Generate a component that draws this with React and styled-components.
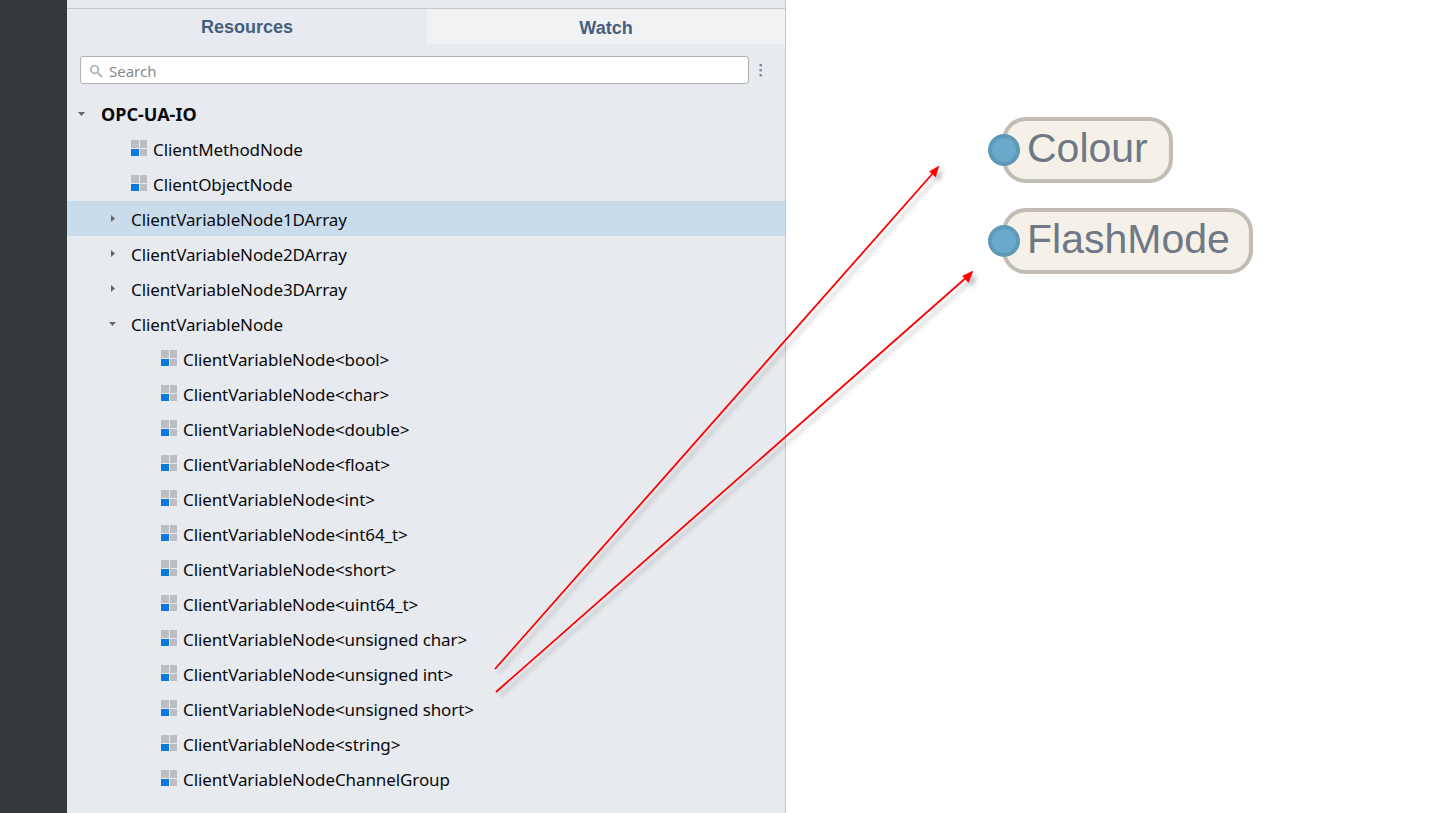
import styled, { createGlobalStyle } from 'styled-components';

const GlobalStyle = createGlobalStyle`
    html, body {
        margin: 0;
        padding: 0;
        background: #fff;
    }
`

const Page = styled.div`
    position: relative;
    display: flex;
    width: 1445px;
    height: 813px;
    overflow: hidden;
    background: #fff;
`

const Rail = styled.div`
    width: 67px;
    flex: none;
    background: #33393d;
`

const Panel = styled.aside`
    width: 718px;
    flex: none;
    padding-top: 8px;
    background: #e7eaef;
    border-right: 1px solid #c6c6c6;
`

const Tabs = styled.div`
    display: flex;
    height: 35px;
    border-top: 1px solid #c9c9c9;
`

const Tab = styled.div`
    display: flex;
    align-items: center;
    justify-content: center;
    width: ${p => p.$width}px;
    padding-top: ${p => (p.$active ? 2 : 3)}px;
    box-sizing: border-box;
    background: ${p => (p.$active ? '#e7eaef' : '#f0f2f4')};
    color: #45607e;
    font: 700 18px "Liberation Sans", sans-serif;
`

const SearchRow = styled.div`
    display: flex;
    align-items: center;
    gap: 8px;
    padding: 12px 0 0 13px;
`

const SearchBox = styled.div`
    display: flex;
    align-items: center;
    gap: 6px;
    box-sizing: border-box;
    width: 669px;
    height: 28px;
    padding: 1px 0 0 8px;
    background: #fff;
    border: 1px solid #b0b0b0;
    border-radius: 3px;
    color: #8a8a8a;
    font: 15px "Noto Sans", sans-serif;
`

const Tree = styled.div`
    margin-top: 12px;
`

const Row = styled.div`
    display: flex;
    align-items: center;
    box-sizing: border-box;
    height: 35px;
    padding-top: ${p => (p.$bold ? 0 : 2)}px;
    padding-left: ${p => p.$indent}px;
    background: ${p => (p.$selected ? '#c9dcec' : 'transparent')};
    color: #0b0b0b;
    font: ${p => (p.$bold ? 700 : 400)} ${p => (p.$bold ? 18 : 17)}px "Noto Sans", sans-serif;
    letter-spacing: ${p => (p.$bold ? 0 : -0.1)}px;
`

const CaretSlot = styled.span`
    display: flex;
    align-items: center;
    width: ${p => p.$width}px;
    margin-top: ${p => (p.$root ? 0 : -2)}px;
    flex: none;
`

const IconSlot = styled.span`
    display: flex;
    width: 22px;
    margin-top: -3px;
    flex: none;
`

const Canvas = styled.div`
    display: flex;
    flex-direction: column;
    align-items: flex-start;
    gap: 25px;
    padding: 117px 0 0 216px;
`

const Node = styled.div`
    position: relative;
    box-sizing: border-box;
    width: ${p => p.$width}px;
    height: 66px;
    padding-left: 21px;
    background: #f5f0e8;
    border: 4px solid #c2bcb4;
    border-radius: 24px;
    color: #6f7885;
    font: 41px/54px "Liberation Sans", sans-serif;
`

const Port = styled.span`
    position: absolute;
    left: -18px;
    top: 13px;
    box-sizing: border-box;
    width: 32px;
    height: 32px;
    background: #6aa9cc;
    border: 4px solid #5e99b8;
    border-radius: 50%;
`

const Arrows = styled.svg`
    position: absolute;
    left: 0;
    top: 0;
    pointer-events: none;
`

function NodeIcon() {
    return (
        <svg width="16" height="16" viewBox="0 0 16 16">
            <rect x="0" y="0" width="8" height="8" fill="#bcbec2" />
            <rect x="9" y="0" width="7" height="8" fill="#bcbec2" />
            <rect x="0" y="9" width="8" height="7" fill="#0a78dc" />
            <rect x="9" y="9" width="7" height="7" fill="#bcbec2" />
        </svg>
    )
}

function Caret({ open }) {
    return (
        <svg width="10" height="10" viewBox="0 0 10 10">
            {open
                ? <path d="M1 3 H8 L4.5 7 Z" fill="#666" />
                : <path d="M3 1 V8 L7 4.5 Z" fill="#666" />}
        </svg>
    )
}

const variants = ['bool', 'char', 'double', 'float', 'int', 'int64_t', 'short', 'uint64_t', 'unsigned char', 'unsigned int', 'unsigned short', 'string']

function App() {
    return (
        <Page>
            <GlobalStyle />
            <Rail />
            <Panel>
                <Tabs>
                    <Tab $active $width={360}>Resources</Tab>
                    <Tab $width={358}>Watch</Tab>
                </Tabs>
                <SearchRow>
                    <SearchBox>
                        <svg width="14" height="14" viewBox="0 0 14 14" fill="none" stroke="#b5b5b5" strokeWidth="1.8">
                            <circle cx="5.5" cy="5.5" r="3.8" />
                            <path d="M8.5 8.5 L13 13" />
                        </svg>
                        Search
                    </SearchBox>
                    <svg width="8" height="14" viewBox="0 0 8 14" fill="#7f8a99">
                        <rect x="2.5" y="1" width="2.4" height="2.4" />
                        <rect x="2.5" y="6" width="2.4" height="2.4" />
                        <rect x="2.5" y="11" width="2.4" height="2.4" />
                    </svg>
                </SearchRow>
                <Tree>
                    <Row $bold $indent={10}>
                        <CaretSlot $root $width={24}><Caret open /></CaretSlot>
                        OPC-UA-IO
                    </Row>
                    <Row $indent={64}><IconSlot><NodeIcon /></IconSlot>ClientMethodNode</Row>
                    <Row $indent={64}><IconSlot><NodeIcon /></IconSlot>ClientObjectNode</Row>
                    <Row $selected $indent={41}>
                        <CaretSlot $width={23}><Caret /></CaretSlot>
                        ClientVariableNode1DArray
                    </Row>
                    <Row $indent={41}>
                        <CaretSlot $width={23}><Caret /></CaretSlot>
                        ClientVariableNode2DArray
                    </Row>
                    <Row $indent={41}>
                        <CaretSlot $width={23}><Caret /></CaretSlot>
                        ClientVariableNode3DArray
                    </Row>
                    <Row $indent={41}>
                        <CaretSlot $width={23}><Caret open /></CaretSlot>
                        ClientVariableNode
                    </Row>
                    {variants.map(v => (
                        <Row $indent={94} key={v}><IconSlot><NodeIcon /></IconSlot>{`ClientVariableNode<${v}>`}</Row>
                    ))}
                    <Row $indent={94}><IconSlot><NodeIcon /></IconSlot>ClientVariableNodeChannelGroup</Row>
                </Tree>
            </Panel>
            <Canvas>
                <Node $width={171}><Port />Colour</Node>
                <Node $width={251}><Port />FlashMode</Node>
            </Canvas>
            <Arrows width="1445" height="813" viewBox="0 0 1445 813">
                <defs>
                    <filter id="drop" x="-10%" y="-10%" width="120%" height="120%">
                        <feDropShadow dx="4" dy="4" stdDeviation="2" floodColor="#000" floodOpacity="0.25" />
                    </filter>
                </defs>
                <g filter="url(#drop)" fill="#f00" stroke="#f00">
                    <path d="M495 669 L934 172" strokeWidth="1.8" fill="none" />
                    <path d="M939 166 L929.5 171.5 L935.5 177 Z" strokeWidth="0.5" />
                    <path d="M496 692 L968 276" strokeWidth="1.8" fill="none" />
                    <path d="M973 271 L962.5 276 L968.5 282.5 Z" strokeWidth="0.5" />
                </g>
            </Arrows>
        </Page>
    )
}

export default App;
